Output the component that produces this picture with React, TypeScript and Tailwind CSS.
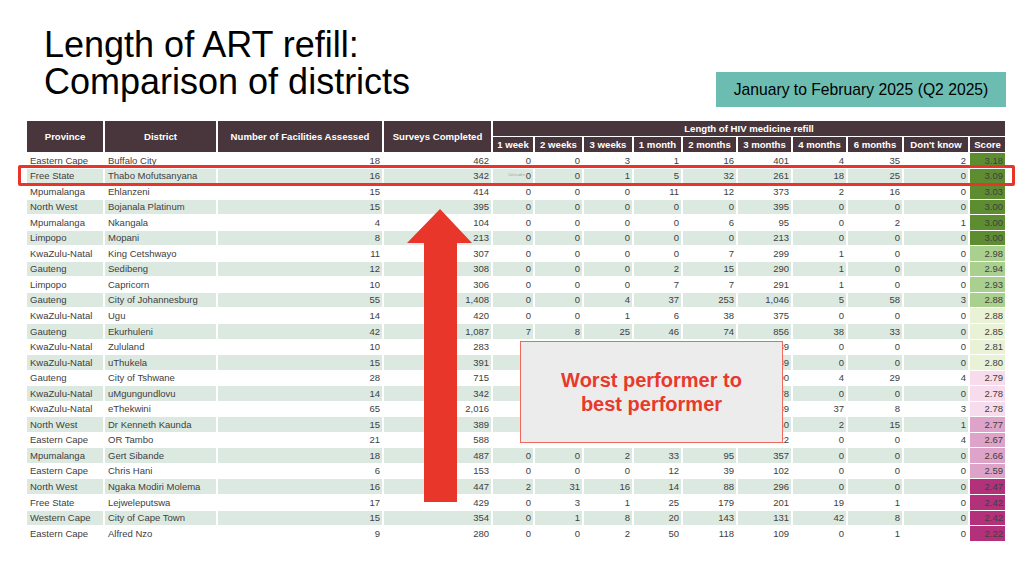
import React from "react";

type Row = {
  p: string;
  d: string;
  f: string;
  s: string;
  v: string[];
  score: string;
  tier: number;
};

const raw: [string, string, string, string, string, string, number][] = [
  ["Eastern Cape", "Buffalo City", "18", "462", "0,0,3,1,16,401,4,35,2", "3.18", 0],
  ["Free State", "Thabo Mofutsanyana", "16", "342", "0,0,1,5,32,261,18,25,0", "3.09", 0],
  ["Mpumalanga", "Ehlanzeni", "15", "414", "0,0,0,11,12,373,2,16,0", "3.03", 0],
  ["North West", "Bojanala Platinum", "15", "395", "0,0,0,0,0,395,0,0,0", "3.00", 0],
  ["Mpumalanga", "Nkangala", "4", "104", "0,0,0,0,6,95,0,2,1", "3.00", 0],
  ["Limpopo", "Mopani", "8", "213", "0,0,0,0,0,213,0,0,0", "3.00", 0],
  ["KwaZulu-Natal", "King Cetshwayo", "11", "307", "0,0,0,0,7,299,1,0,0", "2.98", 1],
  ["Gauteng", "Sedibeng", "12", "308", "0,0,0,2,15,290,1,0,0", "2.94", 1],
  ["Limpopo", "Capricorn", "10", "306", "0,0,0,7,7,291,1,0,0", "2.93", 1],
  ["Gauteng", "City of Johannesburg", "55", "1,408", "0,0,4,37,253,1 046,5,58,3", "2.88", 1],
  ["KwaZulu-Natal", "Ugu", "14", "420", "0,0,1,6,38,375,0,0,0", "2.88", 2],
  ["Gauteng", "Ekurhuleni", "42", "1,087", "7,8,25,46,74,856,38,33,0", "2.85", 2],
  ["KwaZulu-Natal", "Zululand", "10", "283", "-,-,-,-,-,239,0,0,0", "2.81", 2],
  ["KwaZulu-Natal", "uThukela", "15", "391", "-,-,-,-,-,339,0,0,0", "2.80", 2],
  ["Gauteng", "City of Tshwane", "28", "715", "-,-,-,-,-,590,4,29,4", "2.79", 3],
  ["KwaZulu-Natal", "uMgungundlovu", "14", "342", "-,-,-,-,-,278,0,0,0", "2.78", 3],
  ["KwaZulu-Natal", "eThekwini", "65", "2,016", "-,-,-,-,-,1 739,37,8,3", "2.78", 3],
  ["North West", "Dr Kenneth Kaunda", "15", "389", "-,-,-,-,-,340,2,15,1", "2.77", 4],
  ["Eastern Cape", "OR Tambo", "21", "588", "-,-,-,-,-,522,0,0,4", "2.67", 4],
  ["Mpumalanga", "Gert Sibande", "18", "487", "0,0,2,33,95,357,0,0,0", "2.66", 4],
  ["Eastern Cape", "Chris Hani", "6", "153", "0,0,0,12,39,102,0,0,0", "2.59", 4],
  ["North West", "Ngaka Modiri Molema", "16", "447", "2,31,16,14,88,296,0,0,0", "2.47", 5],
  ["Free State", "Lejweleputswa", "17", "429", "0,3,1,25,179,201,19,1,0", "2.42", 5],
  ["Western Cape", "City of Cape Town", "15", "354", "0,1,8,20,143,131,42,8,0", "2.42", 5],
  ["Eastern Cape", "Alfred Nzo", "9", "280", "0,0,2,50,118,109,0,1,0", "2.22", 5],
];

const rows: Row[] = raw.map(([p, d, f, s, v, score, tier]) => ({
  p,
  d,
  f,
  s,
  v: v.split(",").map((x) => (x === "-" ? "" : x.replace(" ", ","))),
  score,
  tier,
}));

const tierClass = [
  "bg-[#5e8d31]",
  "bg-[#a9d08e]",
  "bg-[#e9f2d6]",
  "bg-[#f6dcec]",
  "bg-[#dea3c9]",
  "bg-[#b3317a]",
];

const subHeads = [
  "1 week",
  "2 weeks",
  "3 weeks",
  "1 month",
  "2 months",
  "3 months",
  "4 months",
  "6 months",
  "Don't know",
  "Score",
];

const head =
  "bg-[#48363c] text-white font-bold text-[9.6px] leading-none flex items-center justify-center whitespace-nowrap";

export default function App() {
  return (
    <div
      className="relative w-[1024px] h-[576px] bg-white overflow-hidden"
      style={{ fontFamily: '"Liberation Sans", Arial, sans-serif' }}
    >
      <div className="flex items-start pt-[26px] pl-[44px] pr-[18px]">
        <h1 className="text-[36px] leading-[37px] text-black font-normal">
          Length of ART refill:
          <br />
          Comparison of districts
        </h1>
        <div className="ml-auto mt-[46px] w-[290px] h-[35px] bg-[#6cbcb2] flex items-center justify-center text-[15.7px] text-black">
          January to February 2025 (Q2 2025)
        </div>
      </div>

      <div className="mt-[14px] ml-[27px] w-[978px] grid grid-cols-[76px_111px_164px_107px_40px_47px_48px_47px_53px_53px_53px_54px_64px_35px] grid-rows-[15px_15px] auto-rows-[14.55px] gap-x-[2px] gap-y-[1px]">
        <div className={`${head} row-span-2`}>Province</div>
        <div className={`${head} row-span-2`}>District</div>
        <div className={`${head} row-span-2`}>Number of Facilities Assessed</div>
        <div className={`${head} row-span-2`}>Surveys Completed</div>
        <div className={`${head} col-span-10`}>Length of HIV medicine refill</div>
        {subHeads.map((h) => (
          <div key={h} className={head}>
            {h}
          </div>
        ))}

        {rows.map((r, i) => {
          const bg = i % 2 === 1 ? "bg-[#dce9e0]" : "bg-white";
          const cell =
            "text-[9.5px] leading-none text-[#404040] flex items-center whitespace-nowrap overflow-hidden";
          return (
            <React.Fragment key={r.d}>
              <div className={`${cell} ${bg} pl-[3px]`}>{r.p}</div>
              <div className={`${cell} ${bg} pl-[3px]`}>{r.d}</div>
              <div className={`${cell} ${bg} justify-end pr-[2px]`}>{r.f}</div>
              <div className={`${cell} ${bg} justify-end pr-[2px]`}>{r.s}</div>
              {r.v.map((x, j) => (
                <div key={j} className={`${cell} ${bg} justify-end pr-[2px]`}>
                  {i === 1 && j === 0 ? (
                    <span className="text-[2.6px] text-[#9a9a9a] mr-[1px] leading-none">
                      Click to add te
                    </span>
                  ) : null}
                  {x}
                </div>
              ))}
              <div className={`${cell} ${tierClass[r.tier]} justify-end pr-[2px]`}>
                {r.score}
              </div>
            </React.Fragment>
          );
        })}
      </div>

      {/* highlight */}
      <div className="absolute left-[18px] top-[165px] w-[997px] h-[21px] border-[3px] border-[#e8352b] rounded-[2px]" />

      {/* arrow */}
      <svg
        className="absolute left-0 top-0 pointer-events-none"
        width="1024"
        height="576"
        viewBox="0 0 1024 576"
      >
        <polygon
          points="440,209 472,243 457,243 457,502 424,502 424,243 407,243"
          fill="#e8362a"
        />
      </svg>

      {/* callout */}
      <div className="absolute left-[520px] top-[341px] w-[263px] h-[102px] bg-[#ececec] border border-[#ee6a5e] flex items-center justify-center text-center">
        <div className="text-[20px] leading-[24px] font-bold text-[#e8392d]">
          Worst performer to
          <br />
          best performer
        </div>
      </div>
    </div>
  );
}
